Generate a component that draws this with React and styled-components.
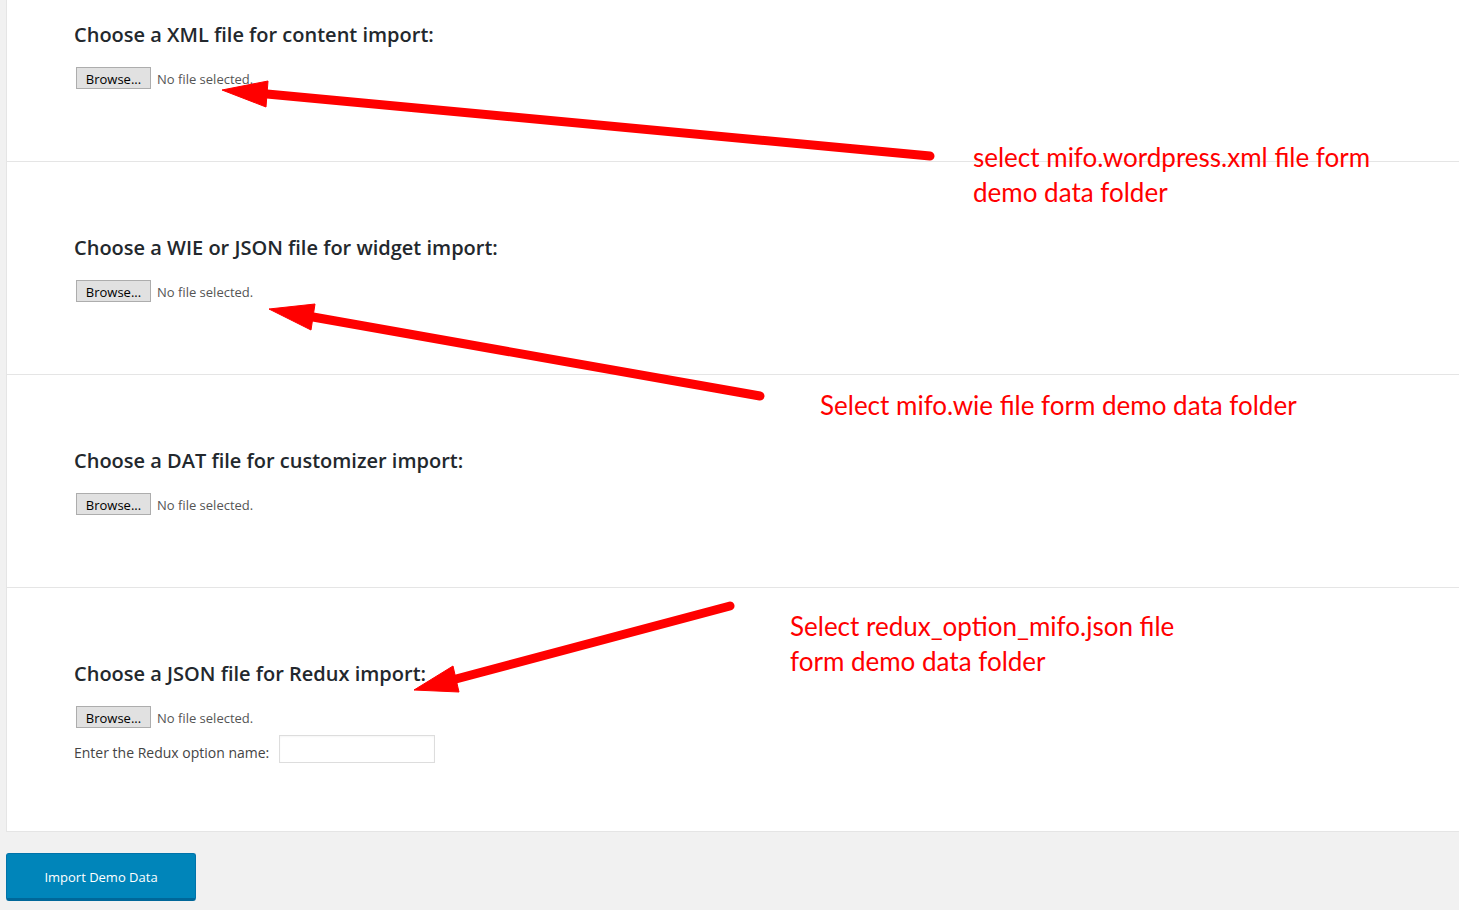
import React from "react";
import styled, { createGlobalStyle } from "styled-components";

const GlobalStyle = createGlobalStyle`
  html, body {
    margin: 0;
    padding: 0;
    background: #f1f1f1;
  }
  body {
    font-family: "Open Sans", "Noto Sans", sans-serif;
    color: #444;
  }
`;

const Page = styled.div`
  position: relative;
  width: 1459px;
  height: 910px;
  overflow: hidden;
  padding-left: 6px;
  box-sizing: border-box;
`;

const Panel = styled.div`
  background: #fff;
  border-left: 1px solid #e5e5e5;
  border-bottom: 1px solid #e5e5e5;
`;

const Section = styled.div`
  padding: ${(p) => (p.$first ? "21px" : "72px")} 0 ${(p) => p.$bottom || "72px"} 67px;
  border-top: ${(p) => (p.$first ? "none" : "1px solid #e5e5e5")};
`;

const Heading = styled.h3`
  margin: 0;
  font-size: 20px;
  line-height: 28px;
  font-weight: 600;
  color: #23282d;
`;

const FileRow = styled.div`
  display: flex;
  align-items: center;
  margin-top: 18px;
  height: 22px;
`;

const BrowseButton = styled.button`
  margin: 0 6px 0 2px;
  height: 22px;
  width: 75px;
  padding: 1px 0 0;
  background: #e1e1e1;
  border: 1px solid #adadad;
  border-radius: 0;
  font-family: inherit;
  font-size: 13px;
  color: #000;
`;

const FileStatus = styled.span`
  font-size: 13px;
  color: #555;
  padding-top: 2px;
`;

const OptionRow = styled.label`
  display: flex;
  align-items: center;
  margin-top: 7px;
  font-size: 14px;
  color: #444;

  span {
    padding-top: 6px;
  }
`;

const OptionInput = styled.input`
  margin-left: 10px;
  width: 156px;
  height: 28px;
  box-sizing: border-box;
  border: 1px solid #ddd;
  box-shadow: inset 0 1px 2px rgba(0, 0, 0, 0.04);
  padding: 0 6px;
`;

const ImportButton = styled.button`
  display: block;
  margin-top: 21px;
  width: 190px;
  height: 48px;
  padding-top: 2px;
  background: #0085ba;
  border: 1px solid #0073aa;
  border-bottom-width: 3px;
  border-bottom-color: #006799;
  border-radius: 3px;
  color: #fff;
  font-family: inherit;
  font-size: 13px;
`;

const Arrows = styled.svg`
  position: absolute;
  left: 0;
  top: 0;
  pointer-events: none;
`;

const Note = styled.div`
  position: absolute;
  left: ${(p) => p.$x}px;
  top: ${(p) => p.$y}px;
  font-family: "Lato", "Open Sans", sans-serif;
  font-size: 26px;
  line-height: 35px;
  color: #ff0000;
  white-space: nowrap;
`;

const sections = [
  { title: "Choose a XML file for content import:" },
  { title: "Choose a WIE or JSON file for widget import:" },
  { title: "Choose a DAT file for customizer import:" },
  { title: "Choose a JSON file for Redux import:", redux: true },
];

const arrows = [
  { from: [930, 156], tip: [222, 90], wings: [[268, 81], [266, 107]] },
  { from: [760, 396], tip: [269, 309], wings: [[315, 304], [311, 330]] },
  { from: [730, 606], tip: [414, 690], wings: [[453, 666], [459, 692]] },
];

function Arrow({ from, tip, wings }) {
  const base = [(wings[0][0] + wings[1][0]) / 2, (wings[0][1] + wings[1][1]) / 2];
  return (
    <g fill="#ff0000" stroke="#ff0000">
      <line x1={from[0]} y1={from[1]} x2={base[0]} y2={base[1]} strokeWidth="9" strokeLinecap="round" />
      <polygon points={`${tip.join(",")} ${wings[0].join(",")} ${wings[1].join(",")}`} strokeWidth="1" />
    </g>
  );
}

export default function App() {
  return (
    <>
      <GlobalStyle />
      <Page>
        <Panel>
          {sections.map((s, i) => (
            <Section key={s.title} $first={i === 0} $bottom={s.redux ? "68px" : undefined}>
              <Heading>{s.title}</Heading>
              <FileRow>
                <BrowseButton>Browse...</BrowseButton>
                <FileStatus>No file selected.</FileStatus>
              </FileRow>
              {s.redux && (
                <OptionRow>
                  <span>Enter the Redux option name:</span>
                  <OptionInput type="text" />
                </OptionRow>
              )}
            </Section>
          ))}
        </Panel>
        <ImportButton>Import Demo Data</ImportButton>

        <Arrows width="1459" height="910">
          {arrows.map((a, i) => (
            <Arrow key={i} {...a} />
          ))}
        </Arrows>
        <Note $x={973} $y={140}>
          select mifo.wordpress.xml file form
          <br />
          demo data folder
        </Note>
        <Note $x={820} $y={388}>Select mifo.wie file form demo data folder</Note>
        <Note $x={790} $y={609}>
          Select redux_option_mifo.json file
          <br />
          form demo data folder
        </Note>
      </Page>
    </>
  );
}
